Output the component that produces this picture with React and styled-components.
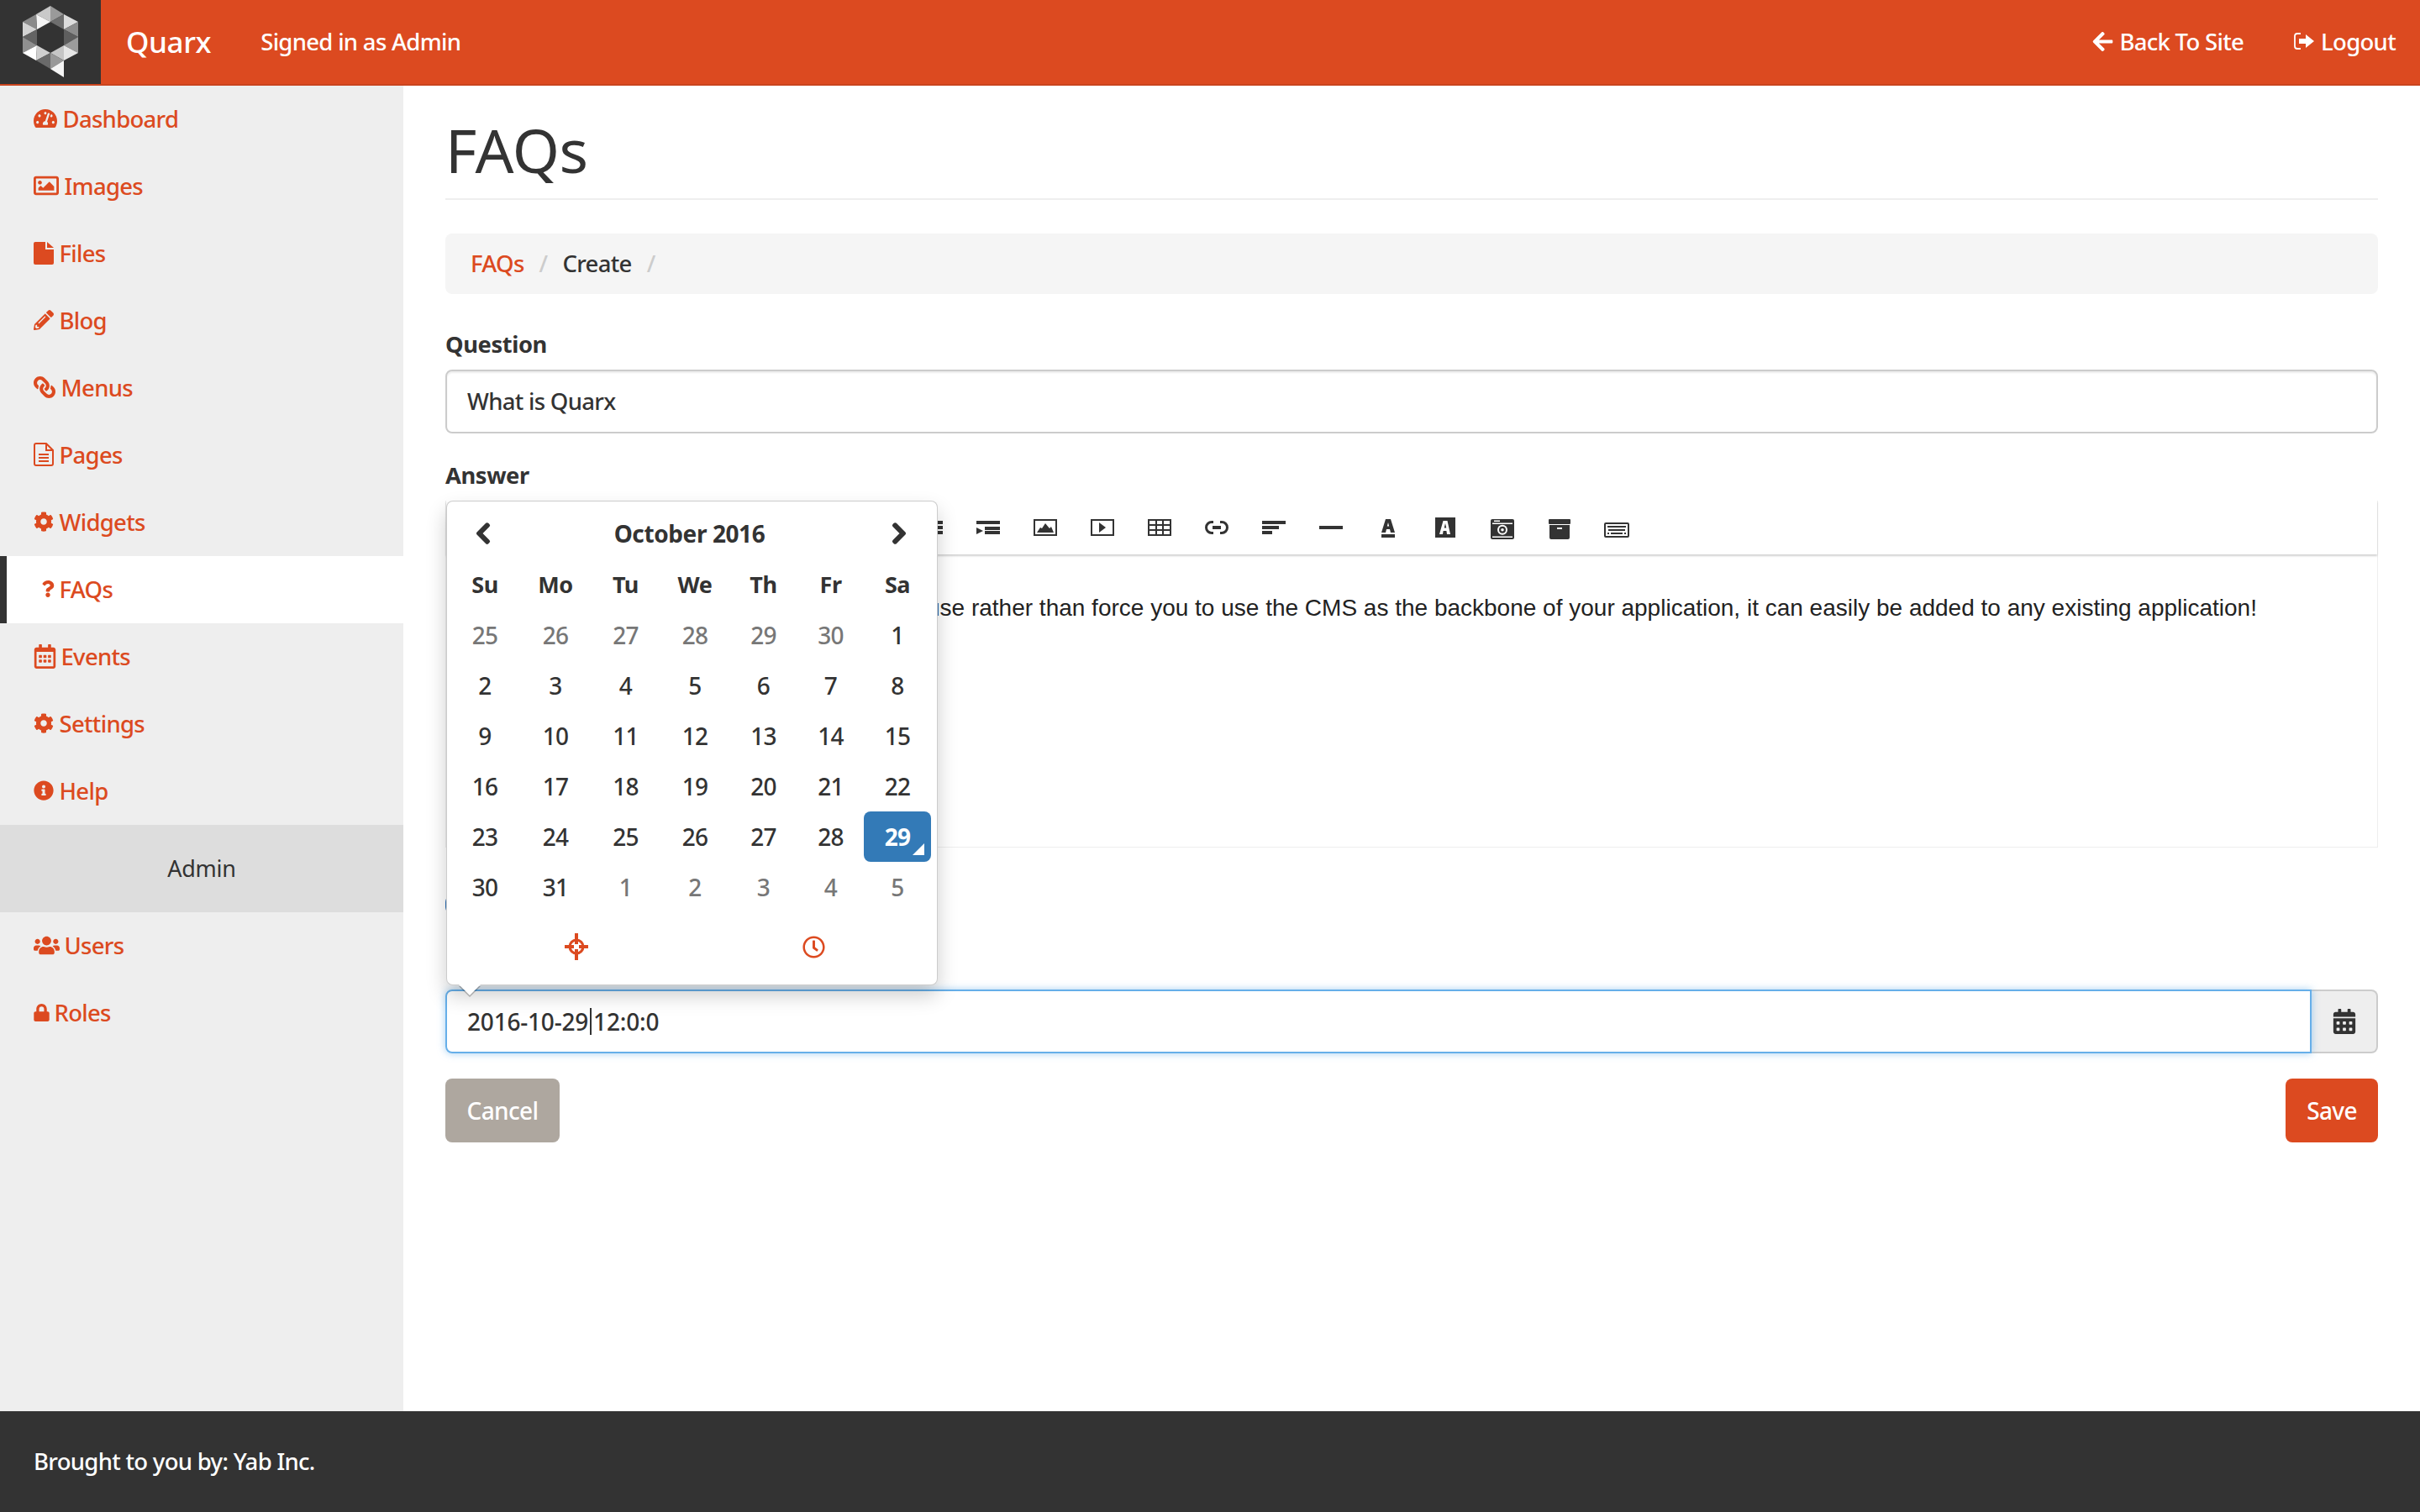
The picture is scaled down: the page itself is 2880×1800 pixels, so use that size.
import React from "react";
import styled, { createGlobalStyle } from "styled-components";
import {
  FaTachometerAlt,
  FaRegImage,
  FaPencilAlt,
  FaLink,
  FaCog,
  FaQuestion,
  FaRegCalendarAlt,
  FaInfoCircle,
  FaUsers,
  FaLock,
  FaArrowLeft,
  FaChevronLeft,
  FaChevronRight,
  FaRegClock,
  FaCalendarAlt,
} from "react-icons/fa";

const ORANGE = "#dc4a20";
const DARK = "#333333";
const FONT = `"Noto Sans", "Open Sans", sans-serif`;

function FileIcon() {
  return (
    <svg width="24" height="27" viewBox="0 0 24 27" fill="currentColor">
      <path d="M0 2a2 2 0 0 1 2-2h12v9h10v16a2 2 0 0 1-2 2H2a2 2 0 0 1-2-2z" />
      <path d="M16 0l8 7h-8z" />
    </svg>
  );
}

function PagesIcon() {
  return (
    <svg width="24" height="28" viewBox="0 0 24 28" fill="none" stroke="currentColor" strokeWidth="2">
      <path d="M1 3a2 2 0 0 1 2-2h12l8 8v16a2 2 0 0 1-2 2H3a2 2 0 0 1-2-2z" />
      <path d="M15 1v8h8M6 14h12M6 18h12M6 22h12" />
    </svg>
  );
}

const menuItems = [
  { label: "Dashboard", icon: <FaTachometerAlt size={28} />, w: 28 },
  { label: "Images", icon: <FaRegImage size={30} />, w: 30 },
  { label: "Files", icon: <FileIcon />, w: 24 },
  { label: "Blog", icon: <FaPencilAlt size={24} />, w: 24 },
  { label: "Menus", icon: <FaLink size={26} style={{ transform: "scaleX(-1)" }} />, w: 26 },
  { label: "Pages", icon: <PagesIcon />, w: 24 },
  { label: "Widgets", icon: <FaCog size={24} />, w: 24 },
  { label: "FAQs", icon: <FaQuestion size={20} />, w: 15, active: true },
  { label: "Events", icon: <FaRegCalendarAlt size={29} />, w: 26 },
  { label: "Settings", icon: <FaCog size={24} />, w: 24 },
  { label: "Help", icon: <FaInfoCircle size={24} />, w: 24 },
];

const adminItems = [
  { label: "Users", icon: <FaUsers size={31} />, w: 30 },
  { label: "Roles", icon: <FaLock size={21} />, w: 18 },
];

const weeks = [
  [[25, 1], [26, 1], [27, 1], [28, 1], [29, 1], [30, 1], [1]],
  [[2], [3], [4], [5], [6], [7], [8]],
  [[9], [10], [11], [12], [13], [14], [15]],
  [[16], [17], [18], [19], [20], [21], [22]],
  [[23], [24], [25], [26], [27], [28], [29, 0, 1]],
  [[30], [31], [1, 1], [2, 1], [3, 1], [4, 1], [5, 1]],
];

const logoTriangles = [
  ["60,7 43,17 60,26", "#c9c9c9"],
  ["60,7 76,17 60,26", "#9a9a9a"],
  ["43,17 60,26 44,35", "#f4f4f4"],
  ["76,17 60,26 76,35", "#6e6e6e"],
  ["76,17 93,26 76,35", "#dcdcdc"],
  ["43,17 27,26 44,35", "#8a8a8a"],
  ["27,26 27,44 44,35", "#d2d2d2"],
  ["93,26 93,44 76,35", "#8c8c8c"],
  ["27,44 44,35 44,54", "#636363"],
  ["93,44 76,35 76,54", "#5e5e5e"],
  ["27,44 27,63 44,54", "#8f8f8f"],
  ["93,44 93,63 76,54", "#9c9c9c"],
  ["27,63 44,54 43,72", "#ffffff"],
  ["93,63 76,54 76,72", "#e6e6e6"],
  ["44,54 60,63 43,72", "#cfcfcf"],
  ["76,54 60,63 76,72", "#c6c6c6"],
  ["43,72 60,63 60,82", "#6a6a6a"],
  ["60,63 76,72 60,82", "#999999"],
  ["76,72 60,82 76,92", "#f5f5f5"],
];

function LogoMark() {
  return (
    <svg width="120" height="100" viewBox="0 0 120 100">
      {logoTriangles.map(([points, fill]) => (
        <polygon key={points} points={points} fill={fill} />
      ))}
    </svg>
  );
}

function LogoutIcon() {
  return (
    <svg width="26" height="22" viewBox="0 0 26 22" fill="none">
      <path d="M8 2H4a3 3 0 0 0-3 3v12a3 3 0 0 0 3 3h4" stroke="currentColor" strokeWidth="1.8" />
      <path d="M6 8h8V3l10 8-10 8v-5H6z" fill="currentColor" />
    </svg>
  );
}

function ScreenshotIcon() {
  return (
    <svg width="28" height="32" viewBox="0 0 28 32" fill="none" stroke={ORANGE}>
      <circle cx="14" cy="16" r="8" strokeWidth="3" />
      <path d="M14 0v13M14 19v13M0 16h11M17 16h11" strokeWidth="4" />
    </svg>
  );
}

const toolbarIcons = [
  // list, sitting half under the picker
  <path key="list" d="M2 8h28v4H2zM2 14h28v4H2zM2 20h28v4H2z" />,
  <path key="indent" d="M2 8h28v4H2zM12 15h18v4H12zM12 20h18v4H12zM2 16l8 4-8 4z" />,
  <g key="image">
    <path fillRule="evenodd" d="M2 6h28v20H2zM4 8v16h24V8z" />
    <path d="M6 22l4-6 2 1 4-6 5 6 2-2 3 7z" />
  </g>,
  <g key="video">
    <path fillRule="evenodd" d="M2 6h28v20H2zM4 8v16h24V8z" />
    <path d="M12 10l8 6-8 6z" />
  </g>,
  <path
    key="table"
    fillRule="evenodd"
    d="M2 6h28v20H2zM4 8v4h7V8zM13 8v4h6V8zM21 8v4h7V8zM4 14v4h7v-4zM13 14v4h6v-4zM21 14v4h7v-4zM4 20v4h7v-4zM13 20v4h6v-4zM21 20v4h7v-4z"
  />,
  <path
    key="link"
    d="M12 8h-2a8 8 0 0 0 0 16h2v-3h-2a5 5 0 0 1 0-10h2zM20 8h2a8 8 0 0 1 0 16h-2v-3h2a5 5 0 0 0 0-10h-2zM11 14h10v4H11z"
  />,
  <path key="align" d="M2 8h28v4H2zM2 14h20v4H2zM2 20h12v4H2z" />,
  <path key="rule" d="M2 14h28v4H2z" />,
  <path
    key="font"
    fillRule="evenodd"
    d="M13 6h6l5 16h-5l-1-4h-4l-1 4H8zM14.8 14.5h2.4L16 10zM8 24h16v4H8z"
  />,
  <path
    key="back"
    fillRule="evenodd"
    d="M4 4h24v24H4zM13.5 8h5l3.5 16h-4l-.6-4h-3.8l-.6 4h-4zM14.7 16.5h2.6L16 11z"
  />,
  <g key="camera">
    <path d="M4 6h24a2 2 0 0 1 2 2v20a2 2 0 0 1-2 2H4a2 2 0 0 1-2-2V8a2 2 0 0 1 2-2z" />
    <path fill="#ffffff" d="M6 7.5h7V9H6zM4 10.5h24V12H4zM4 26.500h24V28H4z" />
    <circle cx="16" cy="18.700" r="6" fill="#ffffff" />
    <circle cx="16" cy="18.700" r="4" />
    <circle cx="16" cy="18.700" r="1.800" fill="#ffffff" />
  </g>,
  <path
    key="archive"
    fillRule="evenodd"
    d="M4 6h24a1 1 0 0 1 1 1v4a1 1 0 0 1-1 1H4a1 1 0 0 1-1-1V7a1 1 0 0 1 1-1zM4 13h24v15a2 2 0 0 1-2 2H6a2 2 0 0 1-2-2zM13 16v2h6v-2z"
  />,
  <g key="keyboard">
    <path
      fillRule="evenodd"
      d="M3 10h26a2 2 0 0 1 2 2v14a2 2 0 0 1-2 2H3a2 2 0 0 1-2-2V12a2 2 0 0 1 2-2zM3 12v14h26V12z"
    />
    <path d="M5 14h22v2H5zM6 18h20v2H6zM5 22h2v2H5zM9 22h14v2H9zM25 22h2v2h-2z" />
  </g>,
];

export default function App() {
  return (
    <>
      <GlobalStyle />
      <Page>
        <Header>
          <LogoBox>
            <LogoMark />
          </LogoBox>
          <Brand>Quarx</Brand>
          <Signed>Signed in as Admin</Signed>
          <HeaderLinks>
            <HeaderLink>
              <FaArrowLeft size={27} />
              Back To Site
            </HeaderLink>
            <HeaderLink>
              <LogoutIcon />
              Logout
            </HeaderLink>
          </HeaderLinks>
        </Header>

        <Body>
          <Sidebar>
            {menuItems.map(({ label, icon, w, active }) => (
              <MenuItem key={label} $active={active}>
                <MenuIcon $w={w}>{icon}</MenuIcon>
                {label}
              </MenuItem>
            ))}
            <MenuHeading>Admin</MenuHeading>
            {adminItems.map(({ label, icon, w }) => (
              <MenuItem key={label}>
                <MenuIcon $w={w}>{icon}</MenuIcon>
                {label}
              </MenuItem>
            ))}
          </Sidebar>

          <Main>
            <PageTitle>FAQs</PageTitle>
            <Breadcrumb>
              <CrumbLink>FAQs</CrumbLink>
              <CrumbSep>/</CrumbSep>
              <span>Create</span>
              <CrumbSep>/</CrumbSep>
            </Breadcrumb>

            <FieldLabel>Question</FieldLabel>
            <TextBox>What is Quarx</TextBox>

            <AnswerLabel>Answer</AnswerLabel>
            <Editor>
              <Toolbar>
                {toolbarIcons.map((shape) => (
                  <ToolButton key={shape.key}>
                    <svg width="32" height="32" viewBox="0 0 32 32" fill={DARK}>
                      {shape}
                    </svg>
                  </ToolButton>
                ))}
              </Toolbar>
              <EditorText>
                use rather than force you to use the CMS as the backbone of your application, it can
                easily be added to any existing application!
              </EditorText>
            </Editor>

            <Toggle />

            <DateField>
              <Picker>
                <PickerHead>
                  <PickerArrow>
                    <FaChevronLeft size={28} />
                  </PickerArrow>
                  <PickerMonth>October 2016</PickerMonth>
                  <PickerArrow>
                    <FaChevronRight size={28} />
                  </PickerArrow>
                </PickerHead>
                <DayGrid>
                  {["Su", "Mo", "Tu", "We", "Th", "Fr", "Sa"].map((d) => (
                    <DayName key={d}>{d}</DayName>
                  ))}
                  {weeks.flat().map(([day, muted, selected], i) => (
                    <Day key={i} $muted={muted} $selected={selected}>
                      {day}
                    </Day>
                  ))}
                </DayGrid>
                <PickerFoot>
                  <ScreenshotIcon />
                  <FaRegClock size={27} color={ORANGE} />
                </PickerFoot>
                <PickerTail />
              </Picker>
              <DateInput>
                2016-10-29
                <Caret />
                12:0:0
              </DateInput>
              <Addon>
                <FaCalendarAlt size={30} color={DARK} />
              </Addon>
            </DateField>

            <Actions>
              <CancelButton>Cancel</CancelButton>
              <SaveButton>Save</SaveButton>
            </Actions>
          </Main>
        </Body>

        <Footer>Brought to you by: Yab Inc.</Footer>
      </Page>
    </>
  );
}

const GlobalStyle = createGlobalStyle`
  html, body {
    margin: 0;
    padding: 0;
  }
  body {
    font-family: ${FONT};
    font-size: 27.5px;
    font-weight: 500;
    letter-spacing: -0.7px;
    color: ${DARK};
    background: #ffffff;
  }
  * {
    box-sizing: border-box;
  }
`;

const Page = styled.div`
  display: flex;
  flex-direction: column;
  width: 2880px;
  height: 1800px;
  overflow: hidden;
`;

const Header = styled.header`
  display: flex;
  align-items: center;
  flex: 0 0 102px;
  background: ${ORANGE};
  border-bottom: 2px solid #c9441e;
  color: #ffffff;
`;

const LogoBox = styled.div`
  display: flex;
  width: 120px;
  height: 100px;
  background: ${DARK};
`;

const Brand = styled.div`
  margin-left: 30px;
  padding-bottom: 1px;
  font-size: 35px;
  letter-spacing: -0.4px;
`;

const Signed = styled.div`
  margin-left: 59px;
  padding-bottom: 2px;
`;

const HeaderLinks = styled.div`
  display: flex;
  gap: 60px;
  margin-left: auto;
  padding-right: 29px;
  padding-bottom: 2px;
`;

const HeaderLink = styled.a`
  display: flex;
  align-items: center;
  gap: 6px;
`;

const Body = styled.div`
  display: flex;
  flex: 1;
  min-height: 0;
`;

const Sidebar = styled.nav`
  flex: 0 0 480px;
  background: #eeeeee;
`;

const MenuItem = styled.a`
  display: flex;
  align-items: center;
  gap: 6.5px;
  height: 80px;
  padding-left: ${(p) => (p.$active ? "41px" : "40px")};
  padding-bottom: 2px;
  color: ${ORANGE};
  background: ${(p) => (p.$active ? "#ffffff" : "transparent")};
  border-left: ${(p) => (p.$active ? `8px solid ${DARK}` : "none")};
`;

const MenuIcon = styled.span`
  display: flex;
  align-items: center;
  justify-content: center;
  flex: 0 0 ${(p) => p.$w}px;
  width: ${(p) => p.$w}px;
  svg {
    flex-shrink: 0;
  }
`;

const MenuHeading = styled.div`
  display: flex;
  align-items: center;
  justify-content: center;
  height: 104px;
  padding-bottom: 2px;
  background: #dddddd;
  font-size: 27px;
  font-weight: 400;
  letter-spacing: -0.3px;
`;

const Main = styled.main`
  flex: 1;
  min-width: 0;
  padding: 0 50px;
`;

const PageTitle = styled.h1`
  margin: 0;
  height: 136px;
  padding-top: 34px;
  font-size: 72px;
  font-weight: 400;
  line-height: 84px;
  letter-spacing: -0.4px;
  border-bottom: 2px solid #eeeeee;
`;

const Breadcrumb = styled.div`
  display: flex;
  align-items: center;
  height: 72px;
  margin-top: 40px;
  padding: 0 30px 2px;
  background: #f5f5f5;
  border-radius: 8px;
`;

const CrumbLink = styled.a`
  color: ${ORANGE};
`;

const CrumbSep = styled.span`
  padding: 0 18px;
  color: #cccccc;
`;

const FieldLabel = styled.label`
  display: block;
  height: 40px;
  margin-top: 40px;
  font-size: 27.3px;
  font-weight: 700;
  line-height: 40px;
  letter-spacing: -0.4px;
`;

const AnswerLabel = styled(FieldLabel)`
  margin-top: 30px;
`;

const TextBox = styled.div`
  display: flex;
  align-items: center;
  height: 76px;
  margin-top: 10px;
  padding: 0 24px 2px;
  border: 2px solid #cccccc;
  border-radius: 8px;
  box-shadow: inset 0 2px 2px rgba(0, 0, 0, 0.075);
`;

const Editor = styled.div`
  margin-top: 10px;
  height: 413px;
  border: 1px solid #eeeeee;
  border-top: none;
`;

const Toolbar = styled.div`
  display: flex;
  align-items: center;
  height: 64px;
  padding-left: 543px;
  background: #ffffff;
  box-shadow: 0 2px 2px rgba(0, 0, 0, 0.18);
`;

const ToolButton = styled.div`
  display: flex;
  align-items: center;
  justify-content: center;
  flex: 0 0 68px;
`;

const EditorText = styled.p`
  margin: 0;
  padding: 44px 40px 0 572px;
  font-family: "Liberation Sans", Arial, sans-serif;
  font-size: 28px;
  font-weight: 400;
  letter-spacing: 0;
  line-height: 40px;
  color: #222222;
  white-space: nowrap;
`;

const Toggle = styled.div`
  width: 100px;
  height: 22px;
  margin-top: 57px;
  background: #2a6fb5;
  border-radius: 8px 0 0 8px;
`;

const DateField = styled.div`
  position: relative;
  display: flex;
  height: 76px;
  margin-top: 90px;
`;

const Picker = styled.div`
  position: absolute;
  left: 1px;
  bottom: 81px;
  z-index: 5;
  width: 585px;
  height: 577px;
  background: #ffffff;
  border: 1px solid rgba(0, 0, 0, 0.2);
  border-radius: 8px;
  box-shadow: 0 12px 24px rgba(0, 0, 0, 0.2);
`;

const PickerHead = styled.div`
  display: flex;
  align-items: center;
  justify-content: space-between;
  height: 70px;
  padding: 6px 31px 0 29px;
`;

const PickerArrow = styled.span`
  display: flex;
  color: ${DARK};
  svg {
    stroke: currentColor;
    stroke-width: 30;
  }
`;

const PickerMonth = styled.div`
  margin-right: 4px;
  font-size: 28px;
  font-weight: 700;
  letter-spacing: -0.4px;
`;

const DayGrid = styled.div`
  display: grid;
  grid-template-columns: 84px 84px 83px 82px 81px 79px 80px;
  grid-auto-rows: 60px;
  margin-top: -1px;
  margin-left: 3px;
`;

const DayName = styled.div`
  display: flex;
  align-items: center;
  justify-content: center;
  padding-bottom: 2px;
  font-size: 27px;
  font-weight: 700;
  letter-spacing: -0.4px;
`;

const Day = styled.div`
  position: relative;
  display: flex;
  align-items: center;
  justify-content: center;
  font-size: 28px;
  color: ${(p) => (p.$selected ? "#ffffff" : p.$muted ? "#777777" : DARK)};
  background: ${(p) => (p.$selected ? "#337ab7" : "transparent")};
  border-radius: 8px;
  font-weight: ${(p) => (p.$selected ? 700 : 500)};
  &::after {
    content: "";
    display: ${(p) => (p.$selected ? "block" : "none")};
    position: absolute;
    right: 8px;
    bottom: 8px;
    border: 7px solid transparent;
    border-right-color: #ffffff;
    border-bottom-color: #ffffff;
  }
`;

const PickerFoot = styled.div`
  display: grid;
  grid-template-columns: 283px 283px;
  justify-items: center;
  align-items: center;
  height: 82px;
  margin-left: 12px;
`;

const PickerTail = styled.div`
  position: absolute;
  left: 14px;
  bottom: -13px;
  border-top: 13px solid #ffffff;
  border-left: 13px solid transparent;
  border-right: 13px solid transparent;
  filter: drop-shadow(0 2px 0 rgba(0, 0, 0, 0.25));
`;

const DateInput = styled.div`
  display: flex;
  align-items: center;
  flex: 1;
  padding: 0 24px;
  border: 2px solid #66afe9;
  border-radius: 8px 0 0 8px;
  box-shadow: 0 0 10px rgba(102, 175, 233, 0.6);
  font-size: 28px;
  letter-spacing: -0.2px;
  z-index: 1;
`;

const Caret = styled.span`
  display: inline-block;
  width: 2px;
  height: 32px;
  margin: 0 2px;
  background: ${DARK};
`;

const Addon = styled.div`
  display: flex;
  align-items: center;
  justify-content: center;
  flex: 0 0 79px;
  background: #eeeeee;
  border: 2px solid #cccccc;
  border-left: none;
  border-radius: 0 8px 8px 0;
`;

const Actions = styled.div`
  display: flex;
  justify-content: space-between;
  margin-top: 30px;
`;

const CancelButton = styled.button`
  width: 136px;
  height: 76px;
  border: none;
  border-radius: 8px;
  background: #aea79f;
  color: #ffffff;
  font-family: ${FONT};
  font-size: 28px;
  font-weight: 500;
  letter-spacing: -0.65px;
`;

const SaveButton = styled(CancelButton)`
  width: 110px;
  background: ${ORANGE};
`;

const Footer = styled.footer`
  display: flex;
  align-items: center;
  flex: 0 0 120px;
  padding: 0 0 2px 40px;
  background: ${DARK};
  color: #ffffff;
`;
